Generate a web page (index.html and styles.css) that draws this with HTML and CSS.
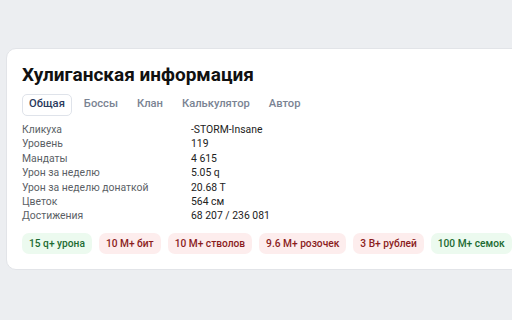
FILE: index.html
```html
<!DOCTYPE html>
<html lang="ru">
<head>
    <meta charset="UTF-8">
    <meta name="viewport" content="width=device-width, initial-scale=1.0">
    <title>Хулиганская информация</title>
    <link rel="stylesheet" href="styles.css">
</head>
<body>
    <div class="card">
        <h1>Хулиганская информация</h1>

        <!-- Tabs -->
        <div class="tabs">
            <span class="tab active">Общая</span>
            <span class="tab">Боссы</span>
            <span class="tab">Клан</span>
            <span class="tab">Калькулятор</span>
            <span class="tab">Автор</span>
        </div>

        <!-- General info -->
        <div class="info">
            <div class="label">Кликуха</div><div class="value">-STORM-Insane</div>
            <div class="label">Уровень</div><div class="value">119</div>
            <div class="label">Мандаты</div><div class="value">4 615</div>
            <div class="label">Урон за неделю</div><div class="value">5.05 q</div>
            <div class="label">Урон за неделю донаткой</div><div class="value">20.68 T</div>
            <div class="label">Цветок</div><div class="value">564 см</div>
            <div class="label">Достижения</div><div class="value">68 207 / 236 081</div>
        </div>

        <!-- Achievements badges -->
        <div class="badges">
            <span class="badge good">15 q+ урона</span>
            <span class="badge bad">10 M+ бит</span>
            <span class="badge bad">10 M+ стволов</span>
            <span class="badge bad">9.6 M+ розочек</span>
            <span class="badge bad">3 B+ рублей</span>
            <span class="badge good">100 M+ семок</span>
        </div>
    </div>
</body>
</html>
```

FILE: styles.css
```css
html, body {
    overflow: hidden;
}

body {
    font-family: 'Roboto', 'Liberation Sans', sans-serif;
    background-color: #eceef1;
    margin: 0;
    padding: 48px 0 0 6px;
    width: 560px;
}

.card {
    width: 520px;
    background-color: #fff;
    border: 1px solid #e2e4e8;
    border-radius: 10px;
    padding: 15px 16px 15px 15px;
    box-sizing: border-box;
}

h1 {
    margin: 0;
    font-size: 19px;
    line-height: 22px;
    font-weight: 700;
    color: #111;
}

.tabs {
    display: flex;
    gap: 5px;
    margin-top: 8px;
}

.tab {
    height: 20px;
    line-height: 18px;
    padding: 0 6px;
    border: 1px solid transparent;
    border-radius: 5px;
    font-size: 11.2px;
    font-weight: 500;
    color: #7a8393;
}

.tab.active {
    border-color: #dfe3ea;
    color: #2a3a5c;
}

.info {
    display: grid;
    grid-template-columns: 169px auto;
    margin-top: 7px;
    font-size: 10.4px;
    line-height: 14.4px;
}

.label {
    color: #5b5f66;
}

.value {
    color: #222;
}

.badges {
    display: flex;
    gap: 7px;
    margin-top: 9px;
}

.badge {
    height: 21px;
    line-height: 21px;
    padding: 0 7px;
    border-radius: 7px;
    font-size: 10.2px;
    font-weight: 500;
    white-space: nowrap;
}

.badge.good {
    background-color: #ecfaef;
    color: #1d6b32;
}

.badge.bad {
    background-color: #fdeded;
    color: #8b1d1d;
}
```
